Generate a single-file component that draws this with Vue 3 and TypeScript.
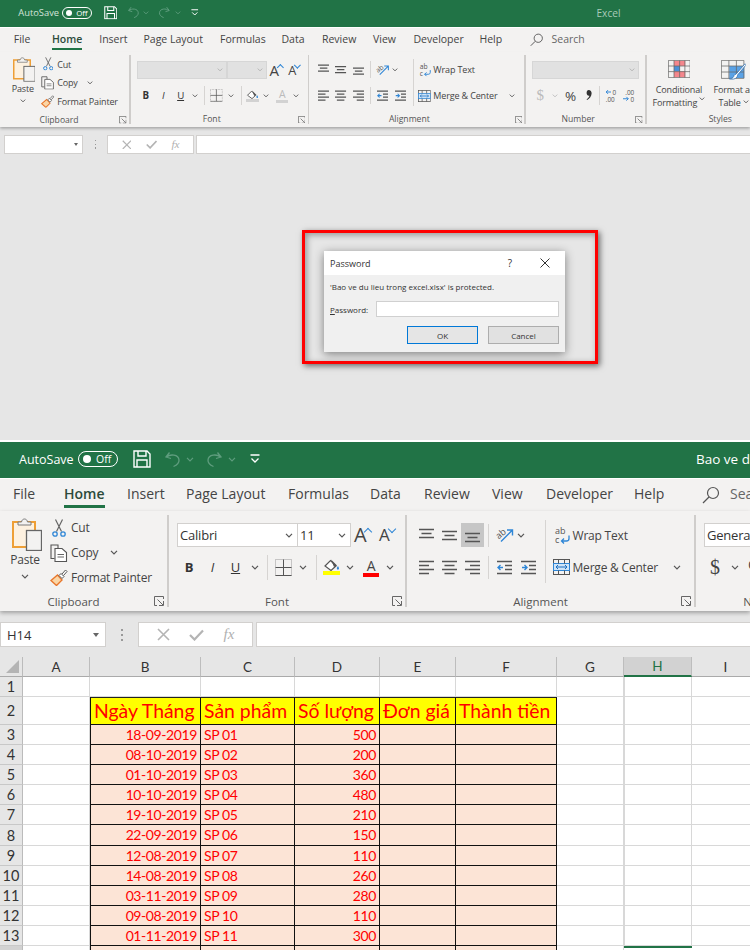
<script setup lang="ts">
interface Pane {
  compact: boolean;
  title: string;
}

const panes: Pane[] = [
  { compact: true, title: 'Excel' },
  { compact: false, title: 'Bao ve du lieu trong excel.xlsx - Excel' },
];

// width = distance to the next tab label
const tabs = [
  { label: 'File', width: 51 },
  { label: 'Home', width: 63, active: true },
  { label: 'Insert', width: 59 },
  { label: 'Page Layout', width: 102 },
  { label: 'Formulas', width: 82 },
  { label: 'Data', width: 54 },
  { label: 'Review', width: 68 },
  { label: 'View', width: 54 },
  { label: 'Developer', width: 88 },
  { label: 'Help', width: 68 },
];

const clipboardRows = [
  { icon: 'cut', label: 'Cut', w: 14, h: 18 },
  { icon: 'copy', label: 'Copy', w: 18, h: 18, more: true },
  { icon: 'painter', label: 'Format Painter', w: 18, h: 17 },
];

const columns = ['A', 'B', 'C', 'D', 'E', 'F', 'G', 'H', 'I'];

const records: [string, string, number][] = [
  ['18-09-2019', 'SP 01', 500],
  ['08-10-2019', 'SP 02', 200],
  ['01-10-2019', 'SP 03', 360],
  ['10-10-2019', 'SP 04', 480],
  ['19-10-2019', 'SP 05', 210],
  ['22-09-2019', 'SP 06', 150],
  ['12-08-2019', 'SP 07', 110],
  ['14-08-2019', 'SP 08', 260],
  ['03-11-2019', 'SP 09', 280],
  ['09-08-2019', 'SP 10', 110],
  ['01-11-2019', 'SP 11', 300],
];

const headings: Record<string, string> = {
  B: 'Ngày Tháng',
  C: 'Sản phẩm',
  D: 'Số lượng',
  E: 'Đơn giá',
  F: 'Thành tiền',
};

const rowNumbers = Array.from({ length: 14 }, (_, i) => i + 1);

const cellText = (row: number, col: string): string => {
  if (row === 2) return headings[col] ?? '';
  const rec = records[row - 3];
  if (!rec) return '';
  if (col === 'B') return rec[0];
  if (col === 'C') return rec[1];
  if (col === 'D') return String(rec[2]);
  return '';
};

const cellClass = (row: number, col: string) => {
  const inTable = row >= 2 && 'BCDEF'.includes(col);
  return {
    boxed: inTable,
    heading: inTable && row === 2,
    data: inTable && row > 2,
    first: inTable && col === 'B',
    num: col === 'B' || col === 'D',
    picked: col === 'H' && row === 14,
    hcol: col === 'H',
  };
};
</script>

<template>
  <main class="page">
    <!-- shared icons, both windows use them -->
    <svg class="defs" aria-hidden="true">
      <symbol id="save" viewBox="0 0 18 18"><path d="M1 1h13l3 3v13H1z M5 1v5h8V1 M4 17v-7h10v7" fill="none" stroke="currentColor" stroke-width="1.4" /></symbol>
      <symbol id="undo" viewBox="0 0 17 17"><path d="M5.500 1.500 2 6l5 1.500 M2.500 6C6 3 14.500 3 15 9c.2 3-2 5-5.500 6.500" fill="none" stroke="currentColor" stroke-width="1.300" /></symbol>
      <symbol id="redo" viewBox="0 0 17 17"><path d="M11.500 1.500 15 6l-5 1.500 M14.500 6C11 3 2.500 3 2 9c-.2 3 2 5 5.500 6.500" fill="none" stroke="currentColor" stroke-width="1.300" /></symbol>
      <symbol id="chev" viewBox="0 0 8 5"><path d="M1 .8 4 3.800 7 .8" fill="none" stroke="currentColor" stroke-width="1.200" /></symbol>
      <symbol id="custom" viewBox="0 0 10 10"><path d="M.5 1h9 M1.500 4.500 5 8l3.500-3.500" fill="none" stroke="currentColor" stroke-width="1.300" /></symbol>
      <symbol id="paste" viewBox="0 0 30 33">
        <rect x="1" y="4" width="22" height="25" fill="#fdf1e0" stroke="#ee9f36" stroke-width="2" />
        <path d="M6 7V4h3.500c.5-4 5.500-4 6 0H19v3z" fill="#f3f2f1" stroke="#7a7a7a" />
        <rect x="14.500" y="12.500" width="15" height="20" fill="#f3f2f1" stroke="#666" stroke-width="1.300" />
      </symbol>
      <symbol id="cut" viewBox="0 0 14 18">
        <path d="M3.500 .5 9.500 12.500 M10.500 .5 4.500 12.500" fill="none" stroke="#666" stroke-width="1.200" />
        <circle cx="3" cy="15" r="2.200" fill="none" stroke="#2f86d6" stroke-width="1.300" />
        <circle cx="11" cy="15" r="2.200" fill="none" stroke="#2f86d6" stroke-width="1.300" />
      </symbol>
      <symbol id="copy" viewBox="0 0 18 18">
        <path d="M4.500 14.500H1V1h7v3.500" fill="#f3f2f1" stroke="#555" stroke-width="1.100" />
        <path d="M5 4.500h7l4.500 4v9H5z" fill="#fff" stroke="#555" stroke-width="1.100" />
        <path d="M7.500 10.500h6.500 M7.500 13h6.500" stroke="#666" />
      </symbol>
      <symbol id="painter" viewBox="0 0 18 17">
        <path d="M1 11.500 7.500 6l4.500 5-5.500 5.500z" fill="#fbd6a6" stroke="#e8762b" stroke-width="1.400" />
        <path d="M9 6.500 11 4.500l3 3-2 2z M12 5 15.500 1 17 2.500 13.500 6.500" fill="#fff" stroke="#555" />
      </symbol>
      <symbol id="launch" viewBox="0 0 10 10"><path d="M9.500 3V.5H.5v9H3 M3.500 3.500l5.500 5.500 M9.500 5v4.500H5" fill="none" stroke="#666" /></symbol>
      <symbol id="grid" viewBox="0 0 17 17"><path d="M.5.500h16v16H.5z" fill="none" stroke="#999" stroke-dasharray="1 1" /><path d="M8.500.5v16 M.5 8.500h16 M.5 16.500h16" stroke="#555" fill="none" /></symbol>
      <symbol id="bucket" viewBox="0 0 17 12"><path d="M2 7 7.500 1.500 13 7l-5 4.500z" fill="#fff" stroke="#555" stroke-width="1.200" /><path d="M8 .5 14 6.500 11 8z" fill="#555" /><path d="M15 7c-1 1.500-1.500 2-1 3s2 .8 2-.5c0-.8-.5-1.500-1-2.500" fill="#2f86d6" /></symbol>
      <symbol id="al-top" viewBox="0 0 15 15"><path d="M0 1.500h15 M2.500 5.500h10 M0 9.500h15" stroke="currentColor" stroke-width="1.400" /></symbol>
      <symbol id="al-mid" viewBox="0 0 15 15"><path d="M0 3.500h15 M2.500 7.500h10 M0 11.500h15" stroke="currentColor" stroke-width="1.400" /></symbol>
      <symbol id="al-bot" viewBox="0 0 15 15"><path d="M0 5.500h15 M2.500 9.500h10 M0 13.500h15" stroke="currentColor" stroke-width="1.400" /></symbol>
      <symbol id="al-left" viewBox="0 0 15 15"><path d="M0 1.500h15 M0 5.500h10 M0 9.500h15 M0 13.500h10" stroke="currentColor" stroke-width="1.400" /></symbol>
      <symbol id="al-center" viewBox="0 0 15 15"><path d="M0 1.500h15 M2.500 5.500h10 M0 9.500h15 M2.500 13.500h10" stroke="currentColor" stroke-width="1.400" /></symbol>
      <symbol id="al-right" viewBox="0 0 15 15"><path d="M0 1.500h15 M5 5.500h10 M0 9.500h15 M5 13.500h10" stroke="currentColor" stroke-width="1.400" /></symbol>
      <symbol id="outdent" viewBox="0 0 15 15"><path d="M0 1.500h15 M8 5.500h7 M8 9.500h7 M0 13.500h15" stroke="#555" stroke-width="1.400" /><path d="M6 7.500H1 M3.500 5 1 7.500 3.500 10" fill="none" stroke="#2f86d6" stroke-width="1.400" /></symbol>
      <symbol id="indent" viewBox="0 0 15 15"><path d="M0 1.500h15 M8 5.500h7 M8 9.500h7 M0 13.500h15" stroke="#555" stroke-width="1.400" /><path d="M1 7.500h5 M3.500 5 6 7.500 3.500 10" fill="none" stroke="#2f86d6" stroke-width="1.400" /></symbol>
      <symbol id="merge" viewBox="0 0 17 16">
        <rect x=".5" y=".5" width="16" height="15" fill="#f3f2f1" stroke="#555" />
        <rect x=".5" y="4.500" width="16" height="7" fill="#cfe4f7" stroke="#2f86d6" />
        <path d="M3 8h11 M5 6 3 8l2 2 M12 6l2 2-2 2" fill="none" stroke="#1c6fc0" />
        <path d="M5.500.5v4 M11.500.5v4 M5.500 11.500v4 M11.500 11.500v4" stroke="#555" />
      </symbol>
      <symbol id="search" viewBox="0 0 18 18"><circle cx="11" cy="7" r="5.500" fill="none" stroke="#555" stroke-width="1.200" /><path d="M7 11 1 17" stroke="#555" stroke-width="1.300" /></symbol>
      <symbol id="comma" viewBox="0 0 8 14"><path d="M3.500 0C6 0 7.500 1.700 7.500 4.300c0 3.800-2.700 7.200-6 9l-.7-1C3 11 4.300 9.300 4.500 7.600 2.400 8 .8 6.200.8 4 .8 1.700 2 0 3.500 0z" fill="currentColor" /></symbol>
      <symbol id="cond" viewBox="0 0 30 24">
        <rect x="8" y="1" width="15" height="7" fill="#f4868c" />
        <rect x="8" y="8" width="8" height="7" fill="#4a90d9" />
        <rect x="8" y="15" width="15" height="8" fill="#f4868c" />
        <path d="M.5.500h29v23H.5z M8 .5v23 M15.500.5v23 M22.500.5v23 M.5 8h29 M.5 15.500h29" fill="none" stroke="#666" />
      </symbol>
      <symbol id="table" viewBox="0 0 33 27">
        <rect x="11" y="8" width="20" height="16" fill="#5aa2e6" />
        <path d="M.5.500h30v24H.5z M10.500.5v24 M20.500.5v24 M.5 8h30 M.5 16h30" fill="none" stroke="#666" />
        <path d="M32 5 20 19c-1 0-3 1-3 3-1 2-3 3-6 3 3 1 8 1 10-2 1-1 1-3 1-3L33 7z" fill="#fff" stroke="#2f6fb0" />
      </symbol>
    </svg>

    <section v-for="pane in panes" :key="pane.title" class="window" :class="{ compact: pane.compact }">
      <div class="chrome">
        <header class="titlebar">
          <span class="autosave">AutoSave</span>
          <span class="toggle"><i class="dot"></i>Off</span>
          <svg class="save" width="18" height="18"><use href="#save" /></svg>
          <svg class="undo" width="17" height="17"><use href="#undo" /></svg>
          <svg class="qchev" width="8" height="5"><use href="#chev" /></svg>
          <svg class="redo" width="17" height="17"><use href="#redo" /></svg>
          <svg class="qchev" width="8" height="5"><use href="#chev" /></svg>
          <svg class="custom" width="10" height="10"><use href="#custom" /></svg>
          <span class="doc-title">{{ pane.title }}</span>
        </header>

        <nav class="tabs">
          <div v-for="tab in tabs" :key="tab.label" class="tab" :style="{ width: tab.width + 'px' }">
            <span :class="{ active: tab.active }">{{ tab.label }}</span>
          </div>
          <svg class="search" width="18" height="18"><use href="#search" /></svg>
          <span class="search-label">Search</span>
        </nav>

        <div class="ribbon">
          <!-- Clipboard -->
          <div class="group g-clipboard">
            <div class="body">
              <div class="paste">
                <svg width="30" height="33"><use href="#paste" /></svg>
                <span>Paste</span>
                <svg class="chev" width="8" height="5"><use href="#chev" /></svg>
              </div>
              <div class="clip-rows">
                <div v-for="row in clipboardRows" :key="row.label" class="clip-row">
                  <span class="clip-icon"><svg :width="row.w" :height="row.h"><use :href="'#' + row.icon" /></svg></span>
                  {{ row.label }}
                  <svg v-if="row.more" class="chev more" width="8" height="5"><use href="#chev" /></svg>
                </div>
              </div>
            </div>
            <div class="label"><span>Clipboard</span><svg width="10" height="10"><use href="#launch" /></svg></div>
          </div>
          <i class="sep"></i>

          <!-- Font -->
          <div class="group g-font">
            <div class="body stack">
              <div class="line">
                <div class="combo name" :class="{ off: pane.compact }">
                  <template v-if="!pane.compact">Calibri</template>
                  <svg class="chev" width="8" height="5"><use href="#chev" /></svg>
                </div>
                <div class="combo size" :class="{ off: pane.compact }">
                  <template v-if="!pane.compact">11</template>
                  <svg class="chev" width="8" height="5"><use href="#chev" /></svg>
                </div>
                <span class="grow big">A<i class="caret up"></i></span>
                <span class="grow small">A<i class="caret down"></i></span>
              </div>
              <div class="line">
                <span class="fmt b">B</span>
                <span class="fmt i">I</span>
                <span class="fmt u">U</span>
                <span class="tiny"><svg class="chev" width="8" height="5"><use href="#chev" /></svg></span>
                <i class="vsep s1"></i>
                <svg class="borders" width="17" height="17"><use href="#grid" /></svg>
                <span class="tiny t2"><svg class="chev" width="8" height="5"><use href="#chev" /></svg></span>
                <i class="vsep s2"></i>
                <span class="swatch fill">
                  <svg width="17" height="12"><use href="#bucket" /></svg>
                  <i class="bar" :class="pane.compact ? 'dim' : 'yellow'"></i>
                </span>
                <span class="tiny t3"><svg class="chev" width="8" height="5"><use href="#chev" /></svg></span>
                <span class="swatch color">
                  <em :class="{ faded: pane.compact }">A</em>
                  <i class="bar" :class="pane.compact ? 'dim' : 'red'"></i>
                </span>
                <span class="tiny t4"><svg class="chev" width="8" height="5"><use href="#chev" /></svg></span>
              </div>
            </div>
            <div class="label"><span>Font</span><svg width="10" height="10"><use href="#launch" /></svg></div>
          </div>
          <i class="sep"></i>

          <!-- Alignment -->
          <div class="group g-align">
            <div class="body">
              <div class="stack align-left">
                <div class="line">
                  <span class="cell"><svg width="15" height="15"><use href="#al-top" /></svg></span>
                  <span class="cell"><svg width="15" height="15"><use href="#al-mid" /></svg></span>
                  <span class="cell" :class="{ on: !pane.compact }"><svg width="15" height="15"><use href="#al-bot" /></svg></span>
                  <i class="vsep a1"></i>
                  <svg class="orient" width="18" height="18" viewBox="0 0 18 18">
                    <text x="0" y="10" transform="rotate(-40 6 8)" class="svg-text">ab</text>
                    <path d="M5 15.500 16 4.500 M11 4h5.500v5.500" fill="none" stroke="#2f86d6" stroke-width="1.400" />
                  </svg>
                  <svg class="chev or-chev" width="8" height="5"><use href="#chev" /></svg>
                </div>
                <div class="line">
                  <span class="cell"><svg width="15" height="15"><use href="#al-left" /></svg></span>
                  <span class="cell"><svg width="15" height="15"><use href="#al-center" /></svg></span>
                  <span class="cell"><svg width="15" height="15"><use href="#al-right" /></svg></span>
                  <i class="vsep a1"></i>
                  <svg class="ind" width="15" height="15"><use href="#outdent" /></svg>
                  <svg class="ind ind2" width="15" height="15"><use href="#indent" /></svg>
                </div>
              </div>
              <i class="vsep tall"></i>
              <div class="stack wrap-col">
                <div class="line wide">
                  <svg class="wrap-i" width="16" height="18" viewBox="0 0 16 18">
                    <text x="1" y="8" class="svg-text">ab</text>
                    <text x="1" y="17" class="svg-text">c</text>
                    <path d="M15 9.500v3c0 1.500-1 2.500-2.500 2.500H7.500 M10 12.500 7.500 15l2.500 2.500" fill="none" stroke="#2f86d6" stroke-width="1.300" />
                  </svg>Wrap Text
                </div>
                <div class="line wide">
                  <svg class="merge-i" width="17" height="16"><use href="#merge" /></svg>Merge &amp; Center
                  <svg class="chev push" width="8" height="5"><use href="#chev" /></svg>
                </div>
              </div>
            </div>
            <div class="label"><span>Alignment</span><svg width="10" height="10"><use href="#launch" /></svg></div>
          </div>
          <i class="sep"></i>

          <!-- Number -->
          <div class="group g-number">
            <div class="body stack">
              <div class="line">
                <div class="combo general" :class="{ off: pane.compact }">
                  <template v-if="!pane.compact">General</template>
                  <svg class="chev" width="8" height="5"><use href="#chev" /></svg>
                </div>
              </div>
              <div class="line">
                <span class="dollar" :class="{ faded: pane.compact }">$</span>
                <svg class="chev dollar-chev" :class="{ faded: pane.compact }" width="8" height="5"><use href="#chev" /></svg>
                <span class="percent">%</span>
                <svg class="comma" width="8" height="14"><use href="#comma" /></svg>
                <i class="vsep n1"></i>
                <svg class="dec" width="18" height="18" viewBox="0 0 18 18">
                  <path d="M8 4H1.500 M4 1.500 1.500 4 4 6.500" fill="none" stroke="#2f86d6" stroke-width="1.300" />
                  <text x="10" y="8" class="svg-text small-text">0</text>
                  <text x="1" y="17" class="svg-text small-text">.00</text>
                </svg>
                <svg class="dec dec2" width="18" height="18" viewBox="0 0 18 18">
                  <text x="3" y="8" class="svg-text small-text">.00</text>
                  <path d="M0 13h7 M4.500 10.500 7 13l-2.500 2.500" fill="none" stroke="#2f86d6" stroke-width="1.300" />
                  <text x="10" y="17" class="svg-text small-text">0</text>
                </svg>
              </div>
            </div>
            <div class="label"><span>Number</span><svg width="10" height="10"><use href="#launch" /></svg></div>
          </div>
          <i class="sep"></i>

          <!-- Styles -->
          <div class="group g-styles">
            <div class="body">
              <div class="style-btn s-cond">
                <svg width="30" height="24"><use href="#cond" /></svg>
                <span>Conditional</span>
                <span>Formatting <svg class="chev" width="8" height="5"><use href="#chev" /></svg></span>
              </div>
              <div class="style-btn s-table">
                <svg width="33" height="27"><use href="#table" /></svg>
                <span>Format as</span>
                <span>Table <svg class="chev" width="8" height="5"><use href="#chev" /></svg></span>
              </div>
            </div>
            <div class="label"><span>Styles</span></div>
          </div>
        </div>

        <div class="formula">
          <div class="namebox">
            <template v-if="!pane.compact">H14</template>
            <i class="arrow"></i>
          </div>
          <span class="dots"><i></i><i></i><i></i></span>
          <div class="fx-box">
            <svg width="13" height="13" viewBox="0 0 13 13"><path d="M1 1l11 11M12 1 1 12" stroke="#b4b4b4" stroke-width="1.600" /></svg>
            <svg width="15" height="12" viewBox="0 0 15 12"><path d="M1 6l4.500 4.500L14 1.500" fill="none" stroke="#b4b4b4" stroke-width="2.200" /></svg>
            <em>fx</em>
          </div>
          <div class="input"></div>
        </div>
      </div>

      <!-- empty workspace with the password prompt -->
      <div v-if="pane.compact" class="workspace">
        <div class="highlight">
          <div class="dialog">
            <div class="dlg-title">
              <span class="dlg-name">Password</span>
              <span class="dlg-help">?</span>
              <svg class="dlg-close" width="10" height="10" viewBox="0 0 10 10"><path d="M.5.500l9 9M9.500.5l-9 9" stroke="#333" /></svg>
            </div>
            <div class="dlg-body">
              <p>'Bao ve du lieu trong excel.xlsx' is protected.</p>
              <div class="dlg-field">
                <label><u>P</u>assword:</label>
                <div class="dlg-input"></div>
              </div>
              <div class="dlg-actions">
                <button class="primary">OK</button>
                <button>Cancel</button>
              </div>
            </div>
          </div>
        </div>
      </div>

      <!-- worksheet -->
      <div v-else class="sheet">
        <div class="corner"><svg width="13" height="13" viewBox="0 0 13 13"><path d="M13 0v13H0z" fill="#b4b4b4" /></svg></div>
        <div v-for="col in columns" :key="col" class="col-head" :class="{ sel: col === 'H' }">{{ col }}</div>
        <template v-for="row in rowNumbers" :key="row">
          <div class="row-head" :class="{ sel: row === 14 }">{{ row }}</div>
          <div v-for="col in columns" :key="col" class="cell-box" :class="cellClass(row, col)">{{ cellText(row, col) }}</div>
        </template>
      </div>
    </section>
  </main>
</template>

<style scoped>
.page {
  width: 750px;
  height: 950px;
  overflow: hidden;
  background: #fff;
  font-family: "Open Sans", "Noto Sans", sans-serif;
  color: #444;
}
.defs {
  position: absolute;
  width: 0;
  height: 0;
}
.svg-text {
  font-family: "Open Sans", sans-serif;
  font-size: 9px;
  letter-spacing: 0;
  fill: #555;
}
.small-text {
  font-size: 8.500px;
}
.window {
  display: flex;
  flex-direction: column;
  height: 508px;
  margin-top: 2px;
  overflow: hidden;
}
.window.compact {
  height: 440px;
  margin-top: 0;
}
.chrome {
  flex: none;
  overflow: hidden;
  background: #e6e6e6;
}
.compact .chrome {
  zoom: 0.75;
}
.compact .titlebar,
.compact .tabs,
.compact .ribbon,
.compact .formula {
  padding-left: 5.33px;
}

/* title bar */
.titlebar {
  display: flex;
  align-items: center;
  box-sizing: border-box;
  height: 36px;
  padding-bottom: 2px;
  background: #217346;
  color: #fff;
  font-size: 12.500px;
  white-space: nowrap;
  overflow: hidden;
}
.titlebar > * {
  flex: none;
}
.autosave {
  width: 59px;
  margin-left: 19px;
}
.toggle {
  display: flex;
  align-items: center;
  box-sizing: border-box;
  width: 40px;
  height: 16px;
  border: 1.300px solid #fff;
  border-radius: 8px;
  padding-left: 4px;
  font-size: 10.500px;
  gap: 5px;
}
.dot {
  width: 8px;
  height: 8px;
  border-radius: 50%;
  background: #fff;
}
.save {
  margin-left: 15px;
}
.undo {
  margin-left: 13px;
  color: #5f9d7e;
}
.qchev {
  margin-left: 5px;
  color: #5f9d7e;
}
.redo {
  margin-left: 12px;
  color: #5f9d7e;
}
.custom {
  margin-left: 14px;
}
.doc-title {
  margin-left: 436px;
  font-size: 13.500px;
}
.compact .doc-title {
  margin-left: 530px;
  color: #a9cbb9;
}
.compact .autosave {
  color: #d2e3da;
}

/* tabs */
.tabs {
  display: flex;
  align-items: flex-start;
  height: 33px;
  border-top: 1px solid #fff;
  box-sizing: border-box;
  background: #f3f2f1;
  padding-top: 5px;
  font-size: 14px;
  line-height: 20px;
  white-space: nowrap;
}
.tabs > * {
  flex: none;
}
.tab:first-child {
  margin-left: 13px;
}
.tab span {
  display: inline-block;
  padding-bottom: 1px;
}
.tab span.active {
  border-bottom: 3px solid #217346;
  color: #2c4a3b;
  font-weight: 600;
}
.search {
  margin-top: 2px;
}
.search-label {
  margin-left: 10px;
  color: #666;
}

/* ribbon */
.ribbon {
  display: flex;
  height: 100px;
  box-sizing: border-box;
  padding-top: 4px;
  background: #f3f2f1;
  box-shadow: 0 2px 4px rgba(0, 0, 0, 0.3);
  position: relative;
  font-size: 12px;
  letter-spacing: -0.2px;
  white-space: nowrap;
}
.sep {
  flex: none;
  width: 2px;
  height: 92px;
  background: #cfcdcb;
}
.group {
  flex: none;
  display: flex;
  flex-direction: column;
  height: 96px;
}
.g-clipboard {
  width: 167px;
}
.g-font {
  width: 236px;
}
.g-align {
  width: 287px;
}
.g-number {
  width: 159px;
}
.g-styles {
  width: 196px;
}
.body {
  display: flex;
  height: 76px;
}
.stack {
  flex-direction: column;
  gap: 8px;
  padding-top: 8px;
  box-sizing: border-box;
}
.compact .stack {
  gap: 10.500px;
}
.label {
  display: flex;
  align-items: center;
  height: 20px;
  font-size: 11.500px;
  letter-spacing: 0;
  color: #555;
}
.compact .label {
  margin-top: 2.500px;
}
.label span {
  flex: 1;
  text-align: center;
}
.label svg {
  flex: none;
  margin: 0 3px 0 7px;
}
.chev {
  flex: none;
  color: #555;
}

/* clipboard group */
.paste {
  flex: none;
  display: flex;
  flex-direction: column;
  align-items: center;
  width: 50px;
  padding-top: 3px;
  box-sizing: border-box;
}
.paste svg:first-child {
  margin-left: 4px;
}
.paste span {
  line-height: 18px;
}
.paste .chev {
  margin-top: 5px;
}
.clip-row {
  display: flex;
  align-items: center;
  height: 25px;
}
.clip-icon {
  display: flex;
  justify-content: center;
  box-sizing: border-box;
  width: 21px;
  padding-right: 3px;
}
.more {
  margin-left: 12px;
}

/* font group */
.g-font .line {
  display: flex;
  align-items: center;
  height: 24px;
  padding-left: 8px;
}
.combo {
  display: flex;
  align-items: center;
  justify-content: space-between;
  box-sizing: border-box;
  height: 24px;
  padding: 0 4px 0 2px;
  background: #fff;
  border: 1px solid #d2d0ce;
  font-size: 13px;
  color: #333;
}
.combo.off {
  background: #e1e1e1;
  border-color: #d6d6d6;
}
.combo.off .chev {
  color: #b0b0b0;
  margin-left: auto;
}
.name {
  width: 121px;
}
.size {
  width: 54px;
  margin-left: -1px;
}
.grow {
  display: flex;
  align-items: flex-start;
  font-size: 20px;
  line-height: 24px;
  color: #444;
}
.big {
  margin-left: 3px;
  width: 25px;
}
.small {
  font-size: 17px;
  width: 20px;
}
.caret {
  width: 5px;
  height: 5px;
  margin-left: -1px;
  border-left: 1.300px solid #2f86d6;
  border-top: 1.300px solid #2f86d6;
  transform: rotate(45deg);
  margin-top: 6px;
}
.caret.down {
  transform: rotate(225deg);
  margin-top: 3px;
}
.fmt {
  flex: none;
  text-align: center;
  font-size: 13px;
  color: #333;
}
.b {
  width: 24px;
  font-weight: 700;
}
.i {
  width: 23px;
  font-style: italic;
}
.u {
  width: 23px;
  text-decoration: underline;
}
.tiny {
  flex: none;
  display: flex;
  justify-content: center;
  width: 14px;
  margin-left: 1px;
}
.vsep {
  flex: none;
  width: 1px;
  height: 25px;
  background: #d6d4d2;
}
.s1 {
  margin-left: 5px;
}
.borders {
  margin-left: 7px;
}
.t2 {
  margin-left: 4px;
}
.s2 {
  margin-left: 6px;
}
.swatch {
  flex: none;
  display: flex;
  flex-direction: column;
  align-items: center;
}
.fill {
  width: 17px;
  margin-left: 6px;
}
.t3 {
  margin-left: 3px;
}
.color {
  width: 16px;
  margin-left: 6px;
}
.color em {
  font-style: normal;
  font-size: 14px;
  line-height: 15px;
  color: #444;
}
.faded {
  color: #bbb !important;
}
.t4 {
  margin-left: 4px;
}
.bar {
  width: 100%;
  height: 4px;
}
.bar.yellow {
  background: #ffff00;
}
.bar.red {
  background: #f00;
}
.bar.dim {
  background: #d2d2d2;
}

/* alignment group */
.g-align .line {
  display: flex;
  align-items: center;
  height: 24px;
}
.align-left {
  display: flex;
  width: 138px;
  padding-left: 8px;
}
.cell {
  flex: none;
  display: flex;
  align-items: center;
  justify-content: center;
  width: 23px;
  height: 24px;
  color: #555;
}
.cell.on {
  background: #c6c6c6;
}
.a1 {
  height: 23px;
  margin-left: 4px;
}
.orient {
  margin-left: 7px;
  overflow: visible;
}
.or-chev {
  margin-left: 3px;
}
.ind {
  margin-left: 8px;
}
.ind2 {
  margin-left: 9px;
}
.tall {
  height: 63px;
  margin-top: 5px;
}
.wrap-col {
  display: flex;
  width: 135px;
  padding-left: 6.500px;
  color: #444;
}
.line.wide {
  justify-content: flex-start;
}
.wrap-i {
  margin: 0 3px 0 1px;
  overflow: visible;
}
.merge-i {
  margin-right: 3px;
}
.push {
  margin-left: auto;
}

/* number group */
.g-number .line {
  display: flex;
  align-items: center;
  height: 24px;
  padding-left: 8px;
}
.general {
  width: 143px;
}
.dollar {
  width: 20px;
  margin-left: 1px;
  text-align: center;
  font-family: "Liberation Serif", serif;
  font-size: 20px;
  color: #444;
}
.dollar-chev {
  margin-left: 6px;
}
.percent {
  width: 22px;
  margin-left: 9px;
  font-size: 18px;
  color: #444;
}
.comma {
  margin-left: 6px;
  color: #333;
}
.n1 {
  margin-left: 10px;
}
.dec {
  margin-left: 6px;
  overflow: visible;
}
.dec2 {
  margin-left: 7px;
}

/* styles group */
.style-btn {
  flex: none;
  display: flex;
  flex-direction: column;
  align-items: center;
  line-height: 17px;
  padding-top: 7px;
  box-sizing: border-box;
}
.compact .style-btn {
  line-height: 17.500px;
}
.style-btn svg:first-child {
  margin-bottom: 7px;
}
.s-cond {
  width: 86px;
}
.s-table {
  width: 60px;
}
.s-table svg:first-child {
  margin-bottom: 4px;
}

/* formula bar */
.formula {
  display: flex;
  align-items: flex-start;
  height: 46px;
  box-sizing: border-box;
  padding-top: 11px;
  background: #e6e6e6;
}
.namebox {
  flex: none;
  display: flex;
  align-items: center;
  justify-content: space-between;
  box-sizing: border-box;
  width: 106px;
  height: 25px;
  padding: 0 6px;
  background: #fff;
  border: 1px solid #d2d0ce;
  font-size: 13px;
  color: #333;
}
.arrow {
  margin-left: auto;
  border: 3.500px solid transparent;
  border-top: 4px solid #666;
  border-bottom: 0;
}
.dots {
  flex: none;
  display: flex;
  flex-direction: column;
  align-items: center;
  justify-content: center;
  gap: 3px;
  width: 32px;
  height: 25px;
}
.dots i {
  width: 2px;
  height: 2px;
  background: #999;
}
.fx-box {
  flex: none;
  display: flex;
  align-items: center;
  justify-content: space-around;
  box-sizing: border-box;
  width: 115px;
  height: 25px;
  padding: 0 8px;
  background: #fff;
  border: 1px solid #d2d0ce;
}
.fx-box em {
  font-family: "Liberation Serif", serif;
  font-size: 15px;
  color: #b0b0b0;
}
.input {
  flex: 1;
  height: 25px;
  margin-left: 3px;
  box-sizing: border-box;
  background: #fff;
  border: 1px solid #d2d0ce;
  border-right: 0;
}

/* empty workspace and dialog */
.workspace {
  flex: 1;
  box-sizing: border-box;
  padding: 69px 0 0 302px;
  background: #e6e6e6;
}
.highlight {
  box-sizing: border-box;
  width: 296px;
  height: 134px;
  padding: 18px 0 0 19px;
  border: 3px solid #f00;
  box-shadow: 2px 2px 6px rgba(0, 0, 0, 0.55), inset 2px 2px 6px rgba(0, 0, 0, 0.35);
}
.dialog {
  width: 241px;
  height: 101px;
  background: #f0f0f0;
  box-shadow: 0 2px 9px rgba(0, 0, 0, 0.45);
  font-size: 8px;
  color: #333;
}
.dlg-title {
  display: flex;
  align-items: center;
  height: 24px;
  padding: 0 15px 0 6px;
  background: #fff;
}
.dlg-name {
  flex: 1;
  font-size: 9px;
}
.dlg-help {
  font-size: 10px;
}
.dlg-close {
  margin-left: 28px;
}
.dlg-body {
  padding: 0 6px;
}
.dlg-body p {
  margin: 0;
  line-height: 24px;
}
.dlg-field {
  display: flex;
  align-items: center;
  margin-top: 2px;
}
.dlg-field label {
  width: 46px;
}
.dlg-input {
  width: 183px;
  height: 16px;
  box-sizing: border-box;
  background: #fff;
  border: 1px solid #d0d0d0;
}
.dlg-actions {
  display: flex;
  justify-content: flex-end;
  gap: 10px;
  margin: 9px 0 0;
}
.dlg-actions button {
  box-sizing: border-box;
  width: 71px;
  height: 18px;
  padding: 0;
  background: #e1e1e1;
  border: 1px solid #adadad;
  font: inherit;
  color: #333;
}
.dlg-actions button.primary {
  background: #e5e5e5;
  border: 1.500px solid #0078d7;
}

/* worksheet */
.sheet {
  flex: 1;
  display: grid;
  grid-template-columns: 23px 67px 111px 94px 85px 76px 101px 67px 68px 68px;
  grid-template-rows: 20px 20px 28px 20px 20px 20px 20px 20px 21px 20px 20px 20px 20px 20px 20px;
  font-family: Lato, "Noto Sans", sans-serif;
  overflow: hidden;
  background: #fff;
}
.corner {
  display: flex;
  align-items: flex-end;
  justify-content: flex-end;
  padding: 0 3px 3px 0;
  box-sizing: border-box;
  background: #e6e6e6;
  border-right: 1px solid #bbb;
  border-bottom: 1px solid #aaa;
  overflow: hidden;
}
.col-head {
  display: flex;
  align-items: center;
  justify-content: center;
  box-sizing: border-box;
  background: #e6e6e6;
  border-right: 1px solid #bdbdbd;
  border-bottom: 1px solid #aaa;
  font-size: 13.500px;
  color: #333;
}
.col-head.sel {
  background: #d2d2d2;
  border-bottom: 2px solid #217346;
  color: #217346;
}
.row-head {
  display: flex;
  align-items: center;
  justify-content: center;
  box-sizing: border-box;
  background: #e6e6e6;
  border-right: 1px solid #bbb;
  border-bottom: 1px solid #c8c8c8;
  font-size: 14.500px;
  color: #333;
}
.row-head.sel {
  background: #d2d2d2;
}
.cell-box {
  box-sizing: border-box;
  border-right: 1px solid #d8d8d8;
  border-bottom: 1px solid #d8d8d8;
  padding: 0 3px;
  white-space: nowrap;
  color: #f00;
  font-size: 14px;
  letter-spacing: -0.4px;
  line-height: 19px;
  overflow: hidden;
}
.cell-box.hcol {
  border-left: 1px solid #d8d8d8;
}
.cell-box.boxed {
  border-right: 1px solid #111;
  border-bottom: 1px solid #111;
}
.cell-box.data {
  background: #fce4d6;
}
.cell-box.num.data {
  text-align: right;
}
.cell-box.first {
  border-left: 1px solid #111;
}
.cell-box.heading {
  background: #ff0;
  border-top: 1px solid #222;
  font-size: 19.400px;
  line-height: 26px;
  letter-spacing: 0;
}
.cell-box.picked {
  border: 0;
  border-top: 2px solid #217346;
}
</style>

<style>
html,
body {
  margin: 0;
  background: #fff;
}
</style>
